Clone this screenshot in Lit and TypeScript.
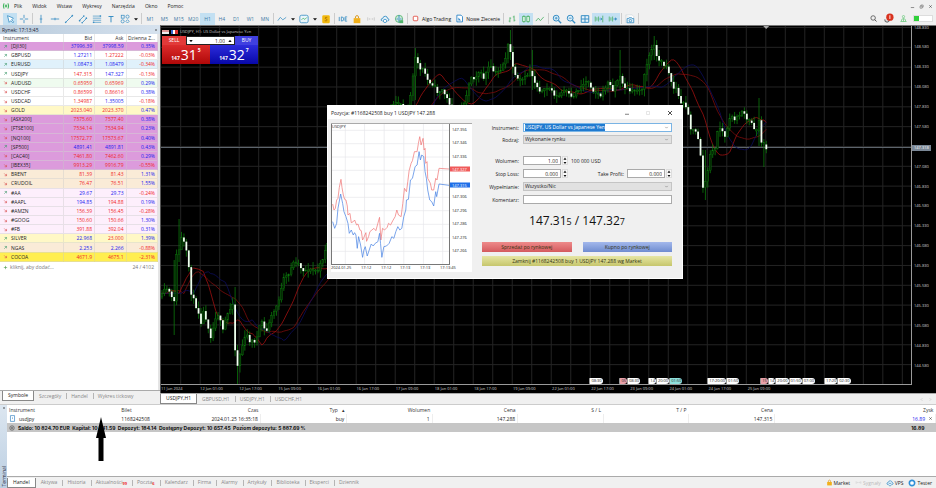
import { LitElement, html, css, svg } from "lit";
import { customElement } from "lit/decorators.js";
import { classMap } from "lit/directives/class-map.js";

const shared = css`
  * { box-sizing: border-box; }
  button, input, select {
    font: inherit;
    color: inherit;
    margin: 0;
    padding: 0;
    border: 0;
    border-radius: 0;
    background: none;
    min-width: 0;
  }
  button { white-space: nowrap; }
  svg { display: block; }
`;

/* ---------- icons ---------- */

const B = "#3a8fc4";
const G = "#4fb36a";

const glyphs: Record<string, unknown> = {
  logo: svg`<path d="M3 2Q1 6 3 10M9 2Q11 6 9 10M5 4V8M7 4V8" stroke="#2eae4f" stroke-width="1.4" fill="none"/>`,
  cursor: svg`<path d="M3 2L10 5L8 7L10.500 9.500L9.500 10.500L7 8L5 10Z" stroke="${B}" fill="#fff"/>`,
  cross: svg`<path d="M6 1V5M6 7V11M1 6H5M7 6H11" stroke="${B}" fill="none"/>`,
  vline: svg`<path d="M6 1V11M4.500 6H7.500" stroke="${B}" fill="none"/>`,
  hline: svg`<path d="M1 6H11M6 4.500V7.500" stroke="${B}" fill="none"/>`,
  trend: svg`<path d="M2 10L10 2" stroke="${B}" fill="none"/><circle cx="2" cy="10" r="1" fill="${B}"/><circle cx="10" cy="2" r="1" fill="${B}"/>`,
  channel: svg`<path d="M1.500 8L7 2.500M5 10.500L10.500 5" stroke="${B}" fill="none"/><circle cx="2" cy="8" r="1" fill="${B}"/><circle cx="7" cy="2.500" r="1" fill="${B}"/><circle cx="5" cy="10.500" r="1" fill="${B}"/><circle cx="10" cy="5" r="1" fill="${B}"/>`,
  fibo: svg`<path d="M1 2.500H11M1 5H11M1 7.500H11M1 10H11" stroke="${B}" fill="none" stroke-width=".8"/><circle cx="2" cy="10" r="1" fill="${B}"/><circle cx="10" cy="2.500" r="1" fill="${B}"/>`,
  text: svg`<path d="M3 3H9M6 3V10" stroke="${B}" stroke-width="1.200" fill="none"/>`,
  shapes: svg`<g stroke="${B}" fill="none" stroke-width=".9"><rect x="1.500" y="1.500" width="3.500" height="3.500"/><circle cx="9" cy="3.200" r="1.900"/><circle cx="3.200" cy="8.800" r="1.900"/><path d="M7 8.800L9 6.800L11 8.800L9 10.800Z"/></g>`,
  caret: svg`<path d="M2 4.500H10L6 9Z" fill="#111"/>`,
  wave: svg`<path d="M1 8L4 4L7 7L11 4" stroke="${B}" stroke-width=".9" fill="none"/>`,
  template: svg`<rect x="1" y="1.500" width="10" height="9" rx="2" fill="#eaf6fb" stroke="${B}"/><path d="M3 7L5 5L7 6.500L9.500 4" stroke="${G}" fill="none"/>`,
  coin: svg`<rect x="1.500" y="1.500" width="9" height="9.500" rx="1.500" fill="#f2b90f"/><path d="M7.500 4Q4.500 3.500 5 5.300Q7.500 6 7.300 7.500Q6.500 9 4.500 8" stroke="#a56a00" stroke-width=".9" fill="none"/>`,
  ide: svg`<path d="M1.500 3.500V8.500M4 3.500V8.500Q7 8.500 7 6T4 3.500M11 3.500H8.500V8.500H11M8.500 6H10.500" stroke="${B}" fill="none"/>`,
  bag: svg`<path d="M2 5H10V11H2Z" fill="#f2b01a"/><path d="M4 5Q4 1.800 6 1.800T8 5" stroke="#d48a00" fill="none"/>`,
  signal: svg`<path d="M2 4V8M4 5V7M8 5V7M10 4V8M6 5.500V6.500" stroke="#c9c9c9" fill="none"/>`,
  cloud: svg`<path d="M3 8.500Q.8 8 1.500 6Q2.500 5 3.300 5.300Q4 2.300 6.500 2.700Q9 3 9 5.300Q11 5.500 10.700 7.300Q10 8.500 9 8.500" stroke="${B}" stroke-width="1.100" fill="#e6f3fb"/><circle cx="6" cy="8.300" r="2" stroke="${B}" fill="#fff"/>`,
  globe: svg`<circle cx="6" cy="5.800" r="4.300" fill="#d8efdf" stroke="${G}"/><path d="M6 1.500Q3.500 6 6 10M6 1.500Q8.500 6 6 10M2 6H10" stroke="${B}" stroke-width=".7" fill="none"/><rect x="6.500" y="7.500" width="4.500" height="3.500" fill="${G}"/>`,
  algo: svg`<rect x="3" y="3" width="6" height="6" rx="1" fill="#fff" stroke="#e2574c" stroke-width="1.200"/>`,
  order: svg`<path d="M2.500 1.500H8L10 3.500V10.500H2.500Z" fill="#fff" stroke="#2f86c8" stroke-width="1.200"/><path d="M4.500 4.500V8.500H8Z" fill="#2f86c8"/>`,
  bars: svg`<path d="M3.500 4V10M2 8.500H3.500M3.500 5H5M8.500 2V9M7 3.500H8.500M8.500 7.500H10" stroke="${G}" fill="none"/>`,
  candles: svg`<path d="M3.500 1.500V10.500M8.500 1.500V10.500" stroke="${G}" fill="none"/><rect x="2" y="3" width="3" height="6" fill="#dff5e6" stroke="${G}"/><rect x="7" y="3" width="3" height="6" fill="#dff5e6" stroke="${G}"/>`,
  zigzag: svg`<path d="M1 8.500L4 5L6.500 8L10.500 3.500" stroke="${G}" fill="none"/>`,
  zoomin: svg`<circle cx="5" cy="5" r="3.500" fill="#dff0fa" stroke="${B}" stroke-width="1.200"/><path d="M7.500 7.500L11 11" stroke="${B}" stroke-width="1.600"/><path d="M3.300 5H6.700M5 3.300V6.700" stroke="${B}"/>`,
  zoomout: svg`<circle cx="5" cy="5" r="3.500" fill="#dff0fa" stroke="${B}" stroke-width="1.200"/><path d="M7.500 7.500L11 11" stroke="${B}" stroke-width="1.600"/><path d="M3.300 5H6.700" stroke="${B}"/>`,
  grid: svg`<path d="M1.500 2H10.500V10H1.500ZM6 2V10M1.500 6H10.500" stroke="${B}" stroke-width="1.200" fill="#e6f3fb"/>`,
  scroll: svg`<path d="M1.500 3V9M3.500 4V8M5.500 3V9M10.500 2V10" stroke="${G}" fill="none"/><path d="M6.500 6H9.500M8 4.500L9.500 6L8 7.500" stroke="${B}" fill="none"/>`,
  shift: svg`<path d="M1.500 3V9M3.500 4V8M5.500 3V9" stroke="${G}" fill="none"/><path d="M6.500 6H9.500" stroke="${B}"/><path d="M8.500 4L11 6L8.500 8Z" fill="${B}"/>`,
  camera: svg`<path d="M1 1H8.500L10.500 3V6M1 1V10.500H3" stroke="#d5dbe0" fill="#fff"/><path d="M2.500 5.500H4.500L5 4.500H8L8.500 5.500H10.500V10.500H2.500Z" fill="#e6f3fb" stroke="${B}"/><circle cx="6.500" cy="8" r="1.500" stroke="${B}" fill="none"/>`,
  search: svg`<circle cx="5.500" cy="5.300" r="3" fill="none" stroke="#444"/><path d="M7.700 7.500L10 10" stroke="#444" stroke-width="1.200"/>`,
  bell: svg`<path d="M2 7Q1.500 10 4.500 10Q7 10 7 7" stroke="#555" fill="#ddd"/><circle cx="7.500" cy="4.500" r="4" fill="#d8321f"/><path d="M7.500 2.500V6.500" stroke="#fff"/>`,
  link: svg`<circle cx="6" cy="3.500" r="1.500" fill="none" stroke="#6cc97e"/><path d="M3 10Q3 6 6 6T9 10M2 10H10M6 6V10" stroke="#6cc97e" fill="none"/>`,
  up: svg`<path d="M3 9L8.500 3.500M4 3.500H8.500V8" stroke="#3f9a6c" stroke-width="1.400" fill="none"/>`,
  down: svg`<path d="M3 3.500L8.500 9M8.500 4.500V9H4" stroke="#d84a4a" stroke-width="1.400" fill="none"/>`,
  plus: svg`<path d="M6 2V10M2 6H10" stroke="#4a9a4a" stroke-width="1.400"/>`,
  doc: svg`<path d="M2.500 1H9.500V11H2.500Z" stroke="#4a90c8" fill="#fff" stroke-width="1.300"/><path d="M6 4V7" stroke="#4a90c8"/>`,
  info: svg`<circle cx="6" cy="6" r="4.500" fill="none" stroke="#333"/><circle cx="6" cy="6" r="1.800" fill="none" stroke="#333"/>`,
  close: svg`<path d="M3 3L9 9M9 3L3 9" stroke="#333" stroke-width="1.300"/>`,
  min: svg`<path d="M2 8.500H10" stroke="#555" stroke-width="1.500"/>`,
  restore: svg`<path d="M2.500 5H7.500V10H2.500ZM4.500 5V2.500H10V7.500H7.500" stroke="#555" stroke-width="1.200" fill="none"/>`,
  max: svg`<path d="M3 3H9V9H3Z" stroke="#ccc" fill="none"/>`,
  chevron: svg`<path d="M3 4.500L6 7.500L9 4.500" stroke="#666" stroke-width="1.200" fill="none"/>`,
  left: svg`<path d="M8 3L5 6L8 9" stroke="#aaa" fill="none"/>`,
  right: svg`<path d="M4 3L7 6L4 9" stroke="#aaa" fill="none"/>`,
  triDown: svg`<path d="M1 3H11L6 10Z" fill="#111"/>`,
  triUp: svg`<path d="M1 9H11L6 2Z" fill="#111"/>`,
  tester: svg`<circle cx="6" cy="6" r="4" fill="#fff" stroke="#2f8fd8" stroke-width="2.400"/>`,
};

const icon = (name: string, size = 10) =>
  html`<svg viewBox="0 0 12 12" width=${size} height=${size} aria-hidden="true">${glyphs[name]}</svg>`;

/* ---------- price chart ---------- */

const W = 751;
const H = 358;
const ORIGIN_X = 161;
const ORIGIN_Y = 26;

const path: [number, number][] = [
  [161, 297], [165, 290], [168, 288], [171, 298], [174, 300], [176, 298], [177, 232], [179, 250], [182, 236], [186, 250],
  [189, 268], [191, 292], [195, 304], [198, 310], [201, 322], [204, 310], [207, 322], [211, 337], [214, 325], [217, 311],
  [220, 320], [223, 331], [226, 318], [230, 310], [233, 302], [235, 348], [237, 368], [240, 355], [244, 340], [247, 335],
  [250, 341], [256, 341], [259, 332], [261, 318], [266, 334], [270, 320], [276, 308], [280, 296], [284, 279], [289, 275],
  [292, 264], [297, 261], [303, 270], [312, 270], [318, 271], [322, 262], [326, 248], [336, 226], [350, 200], [362, 170],
  [375, 140], [388, 118], [396, 102], [402, 104], [408, 110], [412, 90], [415, 60], [417, 57], [420, 70], [424, 70],
  [428, 80], [433, 84], [437, 92], [443, 90], [449, 102], [456, 112], [462, 108], [468, 92], [471, 76], [475, 78],
  [479, 72], [484, 78], [490, 66], [496, 74], [501, 70], [506, 58], [509, 43], [512, 58], [515, 76], [520, 82],
  [526, 78], [531, 70], [536, 84], [542, 92], [550, 88], [558, 98], [565, 90], [572, 98], [580, 88], [588, 80],
  [595, 92], [602, 96], [608, 82], [614, 90], [620, 76], [626, 88], [632, 92], [638, 90], [643, 88], [647, 66],
  [651, 52], [655, 46], [659, 60], [663, 64], [668, 66], [672, 82], [675, 90], [678, 87], [680, 102], [688, 106],
  [691, 128], [698, 134], [701, 150], [703, 190], [706, 182], [709, 170], [712, 148], [716, 150], [718, 132], [722, 126],
  [725, 140], [728, 128], [732, 116], [737, 120], [743, 110], [747, 120], [752, 122], [757, 132], [760, 118], [762, 142],
  [766, 148],
];

const along = (x: number) => {
  for (let i = 1; i < path.length; i++) {
    const [x0, y0] = path[i - 1];
    const [x1, y1] = path[i];
    if (x <= x1) return y0 + ((x - x0) / (x1 - x0)) * (y1 - y0);
  }
  return path[path.length - 1][1];
};

let seed = 11;
const random = () => {
  seed = (seed * 16807) % 2147483647;
  return seed / 2147483647;
};

interface Bar { x: number; open: number; close: number; high: number; low: number; }
const bars: Bar[] = [];
for (let i = 0, prev = 297; i < 249; i++) {
  const x = 162 + i * 2.44;
  const close = along(x) + (random() - 0.5) * 4;
  const top = Math.min(prev, close) - random() * 7;
  const bottom = Math.max(prev, close) + random() * 7;
  bars.push({ x: x - ORIGIN_X, open: prev - ORIGIN_Y, close: close - ORIGIN_Y, high: top - ORIGIN_Y, low: bottom - ORIGIN_Y });
  prev = close;
}
const stretch = (x: number, high: number, low: number) => {
  const bar = bars[Math.round((x - 162) / 2.44)];
  bar.high = Math.min(bar.high, high - ORIGIN_Y);
  bar.low = Math.max(bar.low, low - ORIGIN_Y);
};
stretch(175, 260, 335);
stretch(178, 219, 262);
stretch(234, 287, 349);
stretch(237, 345, 384);
stretch(415, 48, 100);
stretch(511, 30, 60);
stretch(532, 50, 90);
stretch(620, 50, 90);
stretch(654, 36, 60);
stretch(705, 150, 200);
stretch(761, 98, 146);
stretch(765, 140, 167);

const average = (n: number, lag: number) =>
  bars
    .map((bar, i) => {
      const part = bars.slice(Math.max(0, i - n - lag), Math.max(1, i - lag + 1));
      return `${bar.x.toFixed(1)},${(part.reduce((s, b) => s + b.close, 0) / part.length).toFixed(1)}`;
    })
    .join(" ");

const prices = ["148.830", "148.580", "148.330", "148.080", "147.830", "147.580", "147.330", "147.080", "146.830",
  "146.580", "146.330", "146.080", "145.830", "145.580", "145.330", "145.080", "144.830", "144.580"];
const times = ["11 Jan 2024", "12 Jan 01:00", "12 Jan 17:00", "15 Jan 09:00", "16 Jan 01:00", "16 Jan 17:00",
  "17 Jan 09:00", "18 Jan 01:00", "18 Jan 17:00", "19 Jan 09:00", "22 Jan 01:00", "22 Jan 17:00", "23 Jan 09:00",
  "24 Jan 01:00", "24 Jan 17:00", "25 Jan 09:00"];
const events: { at: number; parts: [string, string?][] }[] = [
  { at: 429, parts: [["08:30"]] },
  { at: 459, parts: [["05", "rose"], ["08:30"]] },
  { at: 488, parts: [["14"], ["20:00"], ["01:50", "teal"]] },
  { at: 547, parts: [["17:20:00"], ["01:50"]] },
  { at: 600, parts: [["15", "rose"], ["14"], ["20:00"], ["01:50"], ["07:00"]] },
  { at: 664, parts: [["17:20"], ["02:30"]] },
];

@customElement("price-chart")
export class PriceChart extends LitElement {
  static styles = [shared, css`
    :host {
      flex: 1;
      display: grid;
      grid-template: minmax(0, 1fr) 8px / minmax(0, 1fr) 24px;
      background: #000;
      border-left: 1px solid #555;
      border-top: 1px solid #777;
      color: #d0d0d0;
      font-size: 4px;
      line-height: 6px;
      min-height: 0;
    }
    .plot { position: relative; border-right: 1px solid #9a9a9a; border-bottom: 1px solid #9a9a9a; min-height: 0; }
    .plot > svg { position: absolute; inset: 0; width: 100%; height: 100%; }
    .prices { position: relative; }
    .prices span { position: absolute; left: 2px; transform: translateY(-50%); }
    .prices .now { background: #7a8796; color: #fff; left: 0; padding: 0 2px; }
    .times { position: relative; grid-column: 1 / 3; white-space: nowrap; overflow: hidden; }
    .times span { position: absolute; top: 1px; }
    .event { position: absolute; bottom: 0; display: flex; color: #222; }
    .event span { background: #fff; padding: 0 1px; border-radius: 1px 3px 3px 1px; border-left: 1px solid #999; line-height: 6px; }
    .event .rose { background: #e8a0a8; }
    .event .teal { background: #8fe0dc; }
    .trade {
      position: absolute;
      left: 1px;
      top: 2px;
      width: 96px;
      display: grid;
      grid-template-columns: 1fr 1fr;
      color: #fff;
    }
    .caption { grid-column: 1 / 3; display: flex; gap: 2px; align-items: center; height: 8px; color: #ccc; white-space: nowrap; }
    .flag { width: 7px; height: 4px; background: linear-gradient(#d99 50%, #eee 50%); }
    .flag.two { background: linear-gradient(90deg, #36c 30%, #fff 30% 60%, #d33 60%); }
    .head { grid-column: 1 / 3; display: grid; grid-template-columns: 24px 1fr 23px; height: 9px; }
    .head button { font-size: 5px; line-height: 9px; }
    .volume { display: flex; align-items: center; background: #fff; color: #222; font-size: 5px; border: 1px solid #222; padding: 0 2px; }
    .volume input { flex: 1; width: 0; text-align: right; line-height: 6px; height: 7px; padding-right: 3px; }
    .sell { background: #e23a39; }
    .buy { background: #4040e0; }
    .big { display: flex; justify-content: center; align-items: flex-end; gap: 1px; height: 19px; font-size: 5px; font-weight: bold; line-height: 7px; padding-bottom: 2px; }
    .big b { font-size: 14px; font-weight: normal; line-height: 14px; }
    .big sup { align-self: flex-start; padding-top: 2px; font-size: 5px; }
    .big.sell { background: linear-gradient(#dc2c2c, #b00808); }
    .big.buy { background: linear-gradient(#2c2cdc, #0808a8); }
  `];

  render() {
    const columns = Array.from({ length: 38 }, (_, i) => 19.7 + i * 19.53);
    const rows = Array.from({ length: 18 }, (_, i) => 1.5 + i * 19.83);
    return html`
      <div class="plot">
        <svg viewBox="0 0 ${W} ${H}" preserveAspectRatio="none" role="img" aria-label="USDJPY H1">
          <g stroke="#242424" stroke-width="1">
            ${columns.map((x) => svg`<path d="M${x} 0V${H}"/>`)}
            ${rows.map((y) => svg`<path d="M0 ${y}H${W}"/>`)}
          </g>
          <path d="M0 121.500H${W}" stroke="#5c646c" />
          <polyline points=${average(20, 4)} fill="none" stroke="#7c0c0c" stroke-width=".8" />
          <polyline points=${average(9, 2)} fill="none" stroke="#a01010" stroke-width=".8" />
          <polyline points=${average(12, 8)} fill="none" stroke="#0d0d5c" stroke-width=".8" />
          ${bars.map((b) => {
            const white = b.close - b.open > 2;
            const y = Math.min(b.open, b.close);
            const h = Math.max(1, Math.abs(b.close - b.open));
            return svg`<path d="M${b.x} ${b.high}V${b.low}" stroke="#0b780b" stroke-width=".8"/>
              <rect x=${b.x - 0.9} y=${y} width="1.800" height=${h} fill=${white ? "#f0fff0" : "#042c04"} stroke=${white ? "none" : "#0d7a0d"} stroke-width=".4"/>`;
          })}
          <path d="M603 0H609L606 3Z" fill="#aaa" />
        </svg>
        <div class="trade">
          <div class="caption"><i class="flag"></i><i class="flag two"></i><span>USDJPY, H1: US Dollar vs Japanese Yen</span></div>
          <div class="head">
            <button class="sell">SELL</button>
            <label class="volume">${icon("triDown", 4)}<input aria-label="Wolumen" value="1.00" />${icon("triUp", 4)}</label>
            <button class="buy">BUY</button>
          </div>
          <button class="big sell">147<b>31</b><sup>5</sup></button>
          <button class="big buy">147<b>32</b><sup>7</sup></button>
        </div>
        ${events.map((e) => html`<div class="event" style="left:${(e.at / W) * 100}%">
          ${e.parts.map(([t, tone]) => html`<span class=${tone ?? ""}>${t}</span>`)}
        </div>`)}
      </div>
      <div class="prices">
        ${prices.map((p, i) => (i === 6 ? "" : html`<span style="top:${((1.5 + i * 19.83) / H) * 100}%">${p}</span>`))}
        <span class="now" style="top:34%">147.318</span>
      </div>
      <div class="times">
        ${times.map((t, i) => html`<span style="left:${((i * 39.06) / 774) * 100}%">${t}</span>`)}
      </div>
    `;
  }
}

/* ---------- position window ---------- */

const askLine = "22,312 26,330 30,325 34,300 38,295 42,262 47,238 50,262 54,285 58,298 62,300 66,318 68,345 74,340 78,368 84,365 88,360 94,375 98,372 104,390 108,392 112,420 116,412 122,398 124,424 130,410 134,395 140,390 146,385 152,392 158,370 163,352 167,420 172,385 178,390 186,382 190,370 196,375 204,360 210,350 215,330 220,345 228,350 233,310 238,265 244,275 248,245 252,212 258,190 262,182 268,155 276,155 280,130 284,110 288,135 294,115 297,150 300,145 302,190 306,185 308,235 316,250 320,270 326,270 332,235 336,240 342,205 372,207";
const bidLine = "22,365 28,385 34,370 38,325 46,282 52,310 56,335 62,350 68,370 72,400 78,390 84,405 88,398 92,405 96,445 100,410 106,435 112,472 116,450 120,440 126,468 132,450 138,432 144,438 150,430 158,425 163,400 166,430 170,472 176,440 184,438 192,430 200,410 206,415 212,395 218,380 224,390 230,385 236,350 242,330 244,300 250,298 256,240 262,235 270,200 276,195 282,155 286,180 290,165 296,170 300,215 304,235 308,270 314,300 320,305 326,318 332,275 335,290 342,252 372,256";

@customElement("position-window")
export class PositionWindow extends LitElement {
  static styles = [shared, css`
    :host {
      display: block;
      background: #f0f0f0;
      border: 1px solid #fff;
      color: #222;
      font-size: 5px;
      line-height: 8px;
    }
    .title { display: flex; align-items: center; gap: 15px; height: 13px; padding: 0 8px 0 3px; background: #fff; margin: 0; }
    .title h1 { flex: 1; margin: 0; font-size: 5px; font-weight: normal; line-height: 12px; }
    .title button { height: 8px; }
    .body { display: grid; grid-template-columns: 141px minmax(0, 1fr); gap: 10px; padding: 4px 10px 6px 3px; }
    .ticks { display: grid; grid-template: 141px 7px / 119px 22px; background: #fff; font-size: 4px; line-height: 6px; border-top: 1px solid #aaa; }
    .frame { position: relative; border: 1px solid #777; border-top: 0; }
    .frame svg { width: 100%; height: 100%; }
    .frame span { position: absolute; left: 0; top: 0; }
    .levels { position: relative; }
    .levels span { position: absolute; left: 2px; transform: translateY(-50%); }
    .levels .ask, .levels .bid { left: 0; right: 2px; padding-left: 2px; color: #fff; line-height: 5px; }
    .levels .ask { background: #f05a5a; }
    .levels .bid { background: #1f6fe8; }
    .clock { grid-column: 1 / 3; display: grid; grid-template-columns: 30px 20px 19px 20px 20px 1fr; }
    form { display: flex; flex-direction: column; gap: 4px; margin: 0; }
    .field { background: #fff; border: 1px solid #aaa; height: 9px; line-height: 7px; padding: 0 2px; width: 100%; }
    .num { text-align: right; }
    .row { display: grid; grid-template-columns: 37px 149px; justify-content: space-between; gap: 3px; align-items: center; height: 9px; }
    .row:first-child { height: 8px; }
    .row > label { text-align: right; }
    .row.space { margin-top: 8px; }
    .combo { display: flex; align-items: center; justify-content: space-between; height: 9px; border: 1px solid #c4c4c4; background: #e1e1e1; padding: 0 2px 0 1px; }
    .combo select { appearance: none; height: 7px; line-height: 7px; flex: 1; }
    .combo.active { background: #fff; border-color: #7ab4e4; }
    .combo.active select { background: #1f7ad0; color: #fff; flex: 0 1 auto; }
    .line { display: flex; align-items: center; gap: 3px; }
    .line .num { width: 38px; }
    .spin { display: flex; flex-direction: column; border: 1px solid #ddd; background: #f8f8f8; height: 9px; width: 6px; align-items: center; justify-content: space-around; margin-left: -2px; }
    .push { margin-left: auto; }
    .quote { text-align: center; font-size: 12px; line-height: 16px; margin-top: 5px; color: #111; }
    .quote small { font-size: 9px; }
    .actions { display: grid; grid-template-columns: 1fr 1fr; gap: 4px 11px; padding-top: 8px; }
    .actions button { height: 10px; line-height: 9px; color: #331; }
    .sell { background: linear-gradient(#ee8a8a, #d45a5e); }
    .buy { background: linear-gradient(#a3b8ec, #6f8cd0); }
    .shut { grid-column: 1 / 3; background: linear-gradient(#e6e6a4, #c6c66c); }
  `];

  render() {
    const levels = ["147.356", "147.346", "147.336", "", "", "147.306", "147.296", "147.286", "147.276", "147.266"];
    return html`
      <header class="title">
        <h1>Pozycja: #1168242508 buy 1 USDJPY 147.288</h1>
        <button aria-label="Minimalizuj">${icon("min", 6)}</button>
        <button aria-label="Maksymalizuj">${icon("max", 6)}</button>
        <button aria-label="Zamknij">${icon("close", 8)}</button>
      </header>
      <div class="body">
        <div class="ticks">
          <div class="frame">
            <svg viewBox="20 72 352 420" preserveAspectRatio="none" role="img" aria-label="USDJPY">
              <g stroke="#e6e6ea" stroke-width="2">
                ${[60, 118, 177, 236, 295, 353].map((x) => svg`<path d="M${x} 72V492"/>`)}
                ${[91, 131, 171, 211, 252, 292, 332, 373, 413, 454].map((y) => svg`<path d="M20 ${y}H372"/>`)}
              </g>
              <polyline points=${askLine} fill="none" stroke="#f07878" stroke-width="2.200" />
              <polyline points=${bidLine} fill="none" stroke="#4a84e4" stroke-width="2.200" />
            </svg>
            <span>USDJPY</span>
          </div>
          <div class="levels">
            ${levels.map((l, i) => (l ? html`<span style="top:${((6 + i * 13.45) / 141) * 100}%">${l}</span>` : ""))}
            <span class="ask" style="top:32%">147.327</span>
            <span class="bid" style="top:43%">147.315</span>
          </div>
          <div class="clock"><span>2024.01.25</span><span>17:12</span><span>17:12</span><span>17:13</span><span>17:13</span><span>17:13:45</span></div>
        </div>
        <form @submit=${(e: Event) => e.preventDefault()}>
          <div class="row"><label for="symbol">Instrument:</label>
            <div class="combo active"><select id="symbol"><option>USDJPY, US Dollar vs Japanese Yen</option></select>${icon("chevron", 5)}</div></div>
          <div class="row"><label for="kind">Rodzaj:</label>
            <div class="combo"><select id="kind"><option>Wykonanie rynku</option></select>${icon("chevron", 5)}</div></div>
          <div class="row space"><label for="volume">Wolumen:</label>
            <div class="line"><input class="field num" id="volume" value="1.00" /><span class="spin">${icon("triUp", 4)}${icon("triDown", 4)}</span><span>100 000 USD</span></div></div>
          <div class="row"><label for="sl">Stop Loss:</label>
            <div class="line"><input class="field num" id="sl" value="0.000" /><span class="spin">${icon("triUp", 4)}${icon("triDown", 4)}</span>
              <label class="push" for="tp">Take Profit:</label><input class="field num" id="tp" value="0.000" /><span class="spin">${icon("triUp", 4)}${icon("triDown", 4)}</span></div></div>
          <div class="row"><label for="fill">Wypełnianie:</label>
            <div class="combo"><select id="fill"><option>Wszystko/Nic</option></select>${icon("chevron", 5)}</div></div>
          <div class="row"><label for="note">Komentarz:</label><input class="field" id="note" /></div>
          <div class="quote">147.31<small>5</small> / 147.32<small>7</small></div>
          <div class="actions">
            <button class="sell">Sprzedaż po rynkowej</button>
            <button class="buy">Kupno po rynkowej</button>
            <button class="shut">Zamknij #1168242508 buy 1 USDJPY 147.288 wg Market</button>
          </div>
        </form>
      </div>
    `;
  }
}

/* ---------- application shell ---------- */

type Quote = [string, string, string, string, string, string, string];
/* symbol, direction, bid, ask, change, row tone, price colours (b = blue, r = red, for bid and ask) */
const quotes: Quote[] = [
  ["[DJI30]", "up", "37996.39", "37998.59", "0.35%", "plum", "bb"],
  ["GBPUSD", "up", "1.27211", "1.27222", "-0.03%", "", "br"],
  ["EURUSD", "up", "1.08473", "1.08479", "-0.34%", "sky", "bb"],
  ["USDJPY", "up", "147.315", "147.327", "-0.13%", "", "rb"],
  ["AUDUSD", "down", "0.65959", "0.65969", "0.29%", "mint", "rr"],
  ["USDCHF", "down", "0.86599", "0.86616", "0.38%", "", "rr"],
  ["USDCAD", "down", "1.34987", "1.35005", "-0.18%", "", "rb"],
  ["GOLD", "down", "2023.040", "2023.370", "0.47%", "cream", "rr"],
  ["[ASX200]", "down", "7575.60", "7577.40", "0.38%", "plum", "rr"],
  ["[FTSE100]", "down", "7534.14", "7534.94", "0.23%", "plum", "rr"],
  ["[NQ100]", "down", "17572.77", "17573.67", "0.40%", "plum", "rr"],
  ["[SP500]", "up", "4891.41", "4891.81", "0.43%", "plum", "bb"],
  ["[CAC40]", "down", "7461.80", "7462.60", "0.29%", "plum", "rr"],
  ["[IBEX35]", "down", "9913.29", "9916.79", "-0.55%", "plum", "rr"],
  ["BRENT", "down", "81.39", "81.43", "1.31%", "sand", "rr"],
  ["CRUDOIL", "down", "76.47", "76.51", "1.55%", "sand", "rr"],
  ["#AA", "up", "29.67", "29.73", "-0.24%", "rose", "bb"],
  ["#AAPL", "down", "194.85", "194.88", "0.19%", "rose", "br"],
  ["#AMZN", "down", "156.39", "156.45", "-0.28%", "rose", "rr"],
  ["#GOOG", "down", "150.60", "150.66", "1.30%", "rose", "rr"],
  ["#FB", "down", "391.88", "392.04", "0.31%", "rose", "rr"],
  ["SILVER", "up", "22.968", "23.000", "1.39%", "cream", "br"],
  ["NGAS", "up", "2.253", "2.266", "-0.88%", "sand", "bb"],
  ["COCOA", "down", "4671.9", "4675.1", "-2.31%", "gold", "rr"],
];

const tool = (name: string, on = false) =>
  html`<button class=${classMap({ on })} aria-label=${name}>${icon(name)}</button>`;

@customElement("app-root")
export class AppRoot extends LitElement {
  static styles = [shared, css`
    :host {
      display: flex;
      flex-direction: column;
      position: relative;
      min-height: 100vh;
      overflow: hidden;
      background: #f0f0f0;
      color: #222;
      font-family: "Open Sans", "Noto Sans", sans-serif;
      font-size: 5px;
      line-height: 8px;
    }
    .menu { display: flex; align-items: center; gap: 10px; height: 12px; padding: 0 3px 0 2px; }
    .menu svg + button { margin-left: -6px; }
    .win { margin-left: auto; display: flex; gap: 4px; }
    .tools { display: flex; align-items: center; height: 13px; padding: 0 3px; }
    .tools button { display: grid; place-items: center; height: 12px; }
    .tools .on { background: #c3e0f2; }
    .set { display: grid; grid-auto-flow: column; grid-auto-columns: 14px; }
    .frames { display: grid; grid-template-columns: repeat(9, 1fr); width: 129px; color: #3f7ba6; }
    .caret { width: 8px; }
    .split { width: 1px; height: 11px; background: #ccc; margin: 0 1px; }
    .named { display: flex !important; align-items: center; gap: 2px; padding: 0 2px; color: #111; }
    .far { margin-left: auto; display: flex; align-items: center; gap: 5px; }
    progress { appearance: none; width: 20px; height: 7px; border: 1px solid #ddd; background: #fff; }
    progress::-webkit-progress-bar { background: #fff; }
    progress::-webkit-progress-value { background: #2fd03a; }
    .middle { flex: 1; display: flex; min-height: 379px; }
    .market { width: 160px; display: flex; flex-direction: column; }
    .bar { display: flex; justify-content: space-between; align-items: center; height: 9px; padding: 0 2px; background: linear-gradient(90deg, #b9cbdc, #d6e2ee); color: #223; }
    .list { flex: 1; background: #fff; border-right: 2px solid #e4e4e4; }
    table { border-collapse: collapse; table-layout: fixed; width: 100%; }
    th { font-weight: normal; text-align: right; padding: 0; color: #333; }
    td { padding: 0; text-align: right; }
    .quotes th, .quotes td { padding-right: 2px; border-right: 1px solid rgba(200, 200, 200, 0.4); white-space: nowrap; }
    .quotes { height: 228px; }
    .quotes tbody tr { border-bottom: 1px solid rgba(210, 210, 210, 0.5); }
    .quotes th:first-child { text-align: left; padding-left: 3px; }
    .quotes td:first-child { text-align: left; padding-left: 3px; }
    .name { display: flex; align-items: center; gap: 3px; }
    .b { color: #2020f0; }
    .r { color: #f02828; }
    .plum { background: #dc9bdc; }
    .sky { background: #e0f1fb; }
    .mint { background: #effbef; }
    .cream { background: #fff8c6; }
    .sand { background: #faebd7; }
    .rose { background: #fdeffc; }
    .gold { background: #ffee50; }
    .add { display: flex; align-items: center; gap: 2px; padding: 1px 4px 0 3px; color: #777; }
    .add button { flex: 1; text-align: left; }
    .tabs { display: flex; align-items: center; height: 11px; color: #888; border-top: 1px solid #aaa; }
    .tabs > button { height: 10px; padding: 0 5px; line-height: 9px; position: relative; }
    .tabs > button + button::before { content: ""; position: absolute; left: 0; top: 2px; height: 6px; border-left: 1px solid #b5b5b5; }
    .tabs > .sel { background: #fff; color: #222; border: 1px solid #888; border-top: 0; }
    .tabs > .sel + button::before { display: none; }
    .count { color: #e33; font-size: 4px; font-weight: bold; vertical-align: -1px; }
    .center { flex: 1; display: flex; flex-direction: column; min-width: 0; }
    .market .tabs { padding-left: 2px; margin-bottom: 3px; }
    .arrows { margin-left: auto; padding-right: 3px; display: flex; gap: 4px; }
    .terminal { display: grid; grid-template-columns: 7px minmax(0, 1fr); height: 84px; border-top: 1px solid #ccc; }
    .side { background: linear-gradient(#dce6f0, #bccfe2); display: flex; flex-direction: column; justify-content: space-between; align-items: center; padding: 1px 0; }
    .side span { writing-mode: vertical-rl; transform: rotate(180deg); line-height: 6px; color: #223; }
    .pane { display: flex; flex-direction: column; background: #fff; min-width: 0; }
    .deals th, .deals td { height: 9px; padding-right: 2px; white-space: nowrap; }
    .deals td { border-right: 1px solid #eee; }
    .deals .l { text-align: left; padding-left: 2px; border-right: 0; }
    .deals .sum td { background: #c6c6c6; font-family: Inter, "Open Sans", sans-serif; font-weight: bold; color: #111; border: 0; }
    .deals .sum .end { padding-right: 11px; }
    .gain { display: flex; justify-content: flex-end; align-items: center; gap: 3px; }
    .line { display: flex; align-items: center; gap: 3px; }
    .pane .tabs { margin-top: auto; background: #f0f0f0; height: 12px; }
    .status { margin-left: auto; display: flex; align-items: center; gap: 5px; padding-right: 4px; color: #222; }
    .status a { display: flex; align-items: center; gap: 1px; color: inherit; text-decoration: none; }
    .status .off { color: #bbb; }
    position-window { position: absolute; left: 327px; top: 105px; width: 356px; }
    .pointer { position: absolute; left: 96px; bottom: 27px; }
  `];

  private tabs(names: (string | unknown)[]) {
    return names.map((n, i) => html`<button class=${i ? "" : "sel"}>${n}</button>`);
  }

  render() {
    return html`
      <nav class="menu">
        ${icon("logo", 8)}
        ${["Plik", "Widok", "Wstaw", "Wykresy", "Narzędzia", "Okno", "Pomoc"].map((m) => html`<button>${m}</button>`)}
        <div class="win">
          <button aria-label="Minimalizuj">${icon("min", 5)}</button>
          <button aria-label="Przywróć">${icon("restore", 5)}</button>
          <button aria-label="Zamknij">${icon("close", 5)}</button>
        </div>
      </nav>
      <div class="tools">
        <div class="set">${tool("cursor", true)}${tool("cross")}</div><i class="split"></i>
        <div class="set">${["vline", "hline", "trend", "channel", "fibo", "text", "shapes"].map((n) => tool(n))}</div>
        <button class="caret" aria-label="Obiekty">${icon("caret", 6)}</button><i class="split"></i>
        <div class="frames">
          ${["M1", "M5", "M15", "M20", "H1", "H4", "D1", "W1", "MN"].map((f) => html`<button class=${classMap({ on: f === "H1" })}>${f}</button>`)}
        </div><i class="split"></i>
        <div class="set">${tool("wave")}</div><button class="caret" aria-label="Wykres">${icon("caret", 6)}</button>
        <div class="set">${tool("template")}</div><button class="caret" aria-label="Szablon">${icon("caret", 6)}</button>
        <div class="set">${tool("coin")}</div><i class="split"></i>
        <div class="set">${["ide", "bag", "signal", "cloud", "globe"].map((n) => tool(n))}</div><i class="split"></i>
        <button class="named">${icon("algo", 9)}Algo Trading</button>
        <button class="named">${icon("order", 9)}Nowe Zlecenie</button><i class="split"></i>
        <div class="set">${tool("bars")}${tool("candles", true)}${tool("zigzag")}</div><i class="split"></i>
        <div class="set">${["zoomin", "zoomout", "grid"].map((n) => tool(n))}${tool("scroll", true)}${tool("shift", true)}</div><i class="split"></i>
        <div class="set">${tool("camera")}</div><i class="split"></i>
        <div class="far">
          <button aria-label="Szukaj">${icon("search", 9)}</button>
          <button aria-label="Powiadomienia">${icon("bell", 11)}</button>
          <button aria-label="Połączenie">${icon("link", 9)}</button>
          <progress max="100" value="25" aria-label="Sygnał"></progress>
        </div>
      </div>
      <main class="middle">
        <section class="market">
          <div class="bar"><span>Rynek: 17:13:45</span><button aria-label="Zamknij">${icon("close", 4)}</button></div>
          <div class="list">
            <table class="quotes">
              <colgroup><col style="width:40%" /><col style="width:20%" /><col style="width:20%" /><col style="width:20%" /></colgroup>
              <thead><tr><th>Instrument</th><th>Bid</th><th>Ask</th><th>Dzienna Z...</th></tr></thead>
              <tbody>
                ${quotes.map(([name, dir, bid, ask, change, tone, c]) => html`<tr class=${tone}>
                  <td><span class="name">${icon(dir, 5)}${name}</span></td>
                  <td class=${c[0]}>${bid}</td><td class=${c[1]}>${ask}</td>
                  <td class=${change.startsWith("-") ? "r" : "b"}>${change}</td></tr>`)}
              </tbody>
            </table>
            <div class="add">${icon("plus", 5)}<button>kliknij, aby dodać...</button><span>24 / 4102</span></div>
          </div>
          <div class="tabs">${this.tabs(["Symbole", "Szczegóły", "Handel", "Wykres tickowy"])}</div>
        </section>
        <section class="center">
          <price-chart></price-chart>
          <div class="tabs">${this.tabs(["USDJPY,H1", "GBPUSD,H1", "USDJPY,H1", "USDCHF,H1"])}
            <div class="arrows">${icon("left", 5)}${icon("right", 5)}</div></div>
        </section>
      </main>
      <section class="terminal">
        <div class="side"><button aria-label="Zamknij">${icon("close", 4)}</button><span>Terminal</span></div>
        <div class="pane">
          <table class="deals">
            <colgroup>
              ${[12.1, 8.2, 7, 9.3, 9.2, 9.2, 9.2, 9.2, 9.3, 17.3].map((w) => html`<col style="width:${w}%" />`)}
            </colgroup>
            <thead><tr><th class="l">Instrument</th><th class="l">Bilet</th><th>Czas</th><th>Typ &nbsp;&nbsp;▴</th><th>Wolumen</th><th>Cena</th><th>S / L</th><th>T / P</th><th>Cena</th><th>Zysk</th></tr></thead>
            <tbody>
              <tr><td class="l"><span class="line">${icon("doc", 7)}usdjpy</span></td><td class="l">1168242508</td><td>2024.01.25 16:35:18</td><td>buy</td><td>1</td><td>147.288</td><td></td><td></td><td>147.315</td><td><span class="gain"><span class="b">16.89</span>${icon("close", 5)}</span></td></tr>
              <tr class="sum"><td class="l" colspan="9"><span class="line">${icon("info", 6)}<span>Saldo: 10 824.70 EUR&nbsp; Kapitał: 10 841.59&nbsp; Depozyt: 184.14&nbsp; Dostępny Depozyt: 10 657.45&nbsp; Poziom depozytu: 5 887.69 %</span></span></td><td class="end">16.89</td></tr>
            </tbody>
          </table>
          <div class="tabs">
            ${this.tabs(["Handel", "Aktywa", "Historia", html`Aktualności<span class="count">99</span>`, html`Poczta<span class="count">6</span>`,
              "Kalendarz", "Firma", "Alarmy", "Artykuły", "Biblioteka", "Eksperci", "Dziennik"])}
            <div class="status">
              <a href="#market">${icon("bag", 7)}Market</a>
              <a href="#signals" class="off">${icon("signal", 7)}Sygnały</a>
              <a href="#vps">${icon("cloud", 8)}VPS</a>
              <a href="#tester">${icon("tester", 8)}Tester</a>
            </div>
          </div>
        </div>
      </section>
      <position-window></position-window>
      <svg class="pointer" viewBox="0 0 10 44" width="10" height="44" aria-hidden="true"><path d="M5 0L10 21H7.500V44H2.500V21H0Z" fill="#000" /></svg>
    `;
  }
}
